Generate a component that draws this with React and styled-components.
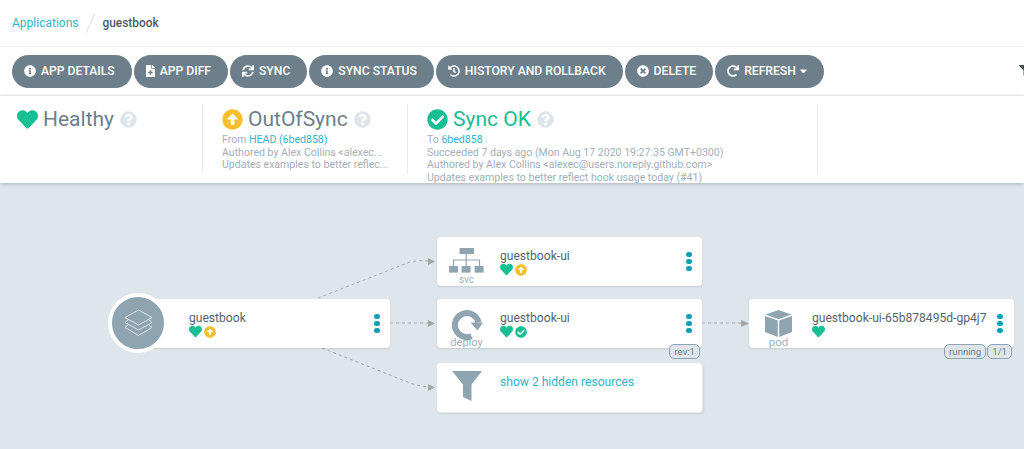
import React from 'react';
import styled, { createGlobalStyle } from 'styled-components';
import {
  FaInfoCircle, FaFileMedical, FaSync, FaHistory, FaTimesCircle, FaRedo, FaCaretDown,
  FaHeart, FaArrowAltCircleUp, FaCheckCircle, FaQuestionCircle, FaFilter,
} from 'react-icons/fa';

const Global = createGlobalStyle`
  html, body { margin: 0; padding: 0; background: #fff; }
  body { font-family: Roboto, "Liberation Sans", sans-serif; }
  * { box-sizing: border-box; }
`;

const Page = styled.div`
  width: 1024px; height: 449px; overflow: hidden;
  display: flex; flex-direction: column;
`;
const TopBar = styled.div`
  height: 46px; flex: none; display: flex; align-items: center;
  padding: 0 12px 0; background: #fff;
`;
const Crumb = styled.a`
  color: #2fb5c9; font-size: 12px;
`;
const Slash = styled.span`
  width: 1px; height: 22px; background: #dbe2e7; transform: rotate(24deg);
  margin: 0 11px 0 12px;
`;
const Current = styled.span`
  color: #4d5a66; font-weight: 500; font-size: 11.9px;
`;
const Toolbar = styled.div`
  height: 50px; flex: none; display: flex; align-items: center; gap: 2px;
  padding: 1px 0 0 12px; background: #fff; position: relative;
  border-top: 1px solid #f4f4f4; border-bottom: 2px solid #f6f6f6;
`;
const Button = styled.button`
  height: 33px; border: 0; border-radius: 17px; background: #6d7f8b; color: #fff;
  display: flex; align-items: center; gap: 5px; padding: 0 17px 0 12px;
  font: 500 12.15px Roboto, sans-serif; white-space: nowrap;
  svg { flex: none; height: 12px; width: 12px; }
`;
const FileIcon = styled(FaFileMedical)`
  && { width: 9px; }
`;
const Caret = styled(FaCaretDown)`
  && { width: 7px; margin-left: -1px; }
`;
const ToolbarFilter = styled.span`
  margin-left: auto; margin-right: -7px; display: flex; color: #44505b; font-size: 12px;
`;
const Summary = styled.div`
  height: 87px; flex: none; display: flex; background: #fff; padding-top: 8px;
  box-shadow: 0 1px 4px rgba(0,0,0,.22); position: relative; z-index: 2;
`;
const Item = styled.div`
  width: ${p => p.$w}px; height: 70px; padding: 2px 10px 0 ${p => p.$pl}px; flex: none;
  border-right: 1px solid #e8ecef;
`;
const Head = styled.div`
  display: flex; align-items: center; gap: 5px; height: 26px;
  font-size: 21px; color: ${p => p.$c || '#6d7f8b'};
`;
const Title = styled.span`line-height: 26px;`;
const HeadIcon = styled.span`
  display: flex; color: ${p => p.$c}; font-size: 21px;
`;
const Help = styled.span`
  display: flex; color: #dee6eb; font-size: 17px; margin-left: 1px;
`;
const Sub = styled.div`
  font-size: 10.55px; line-height: 12.6px; color: #a3b0ba;
  white-space: nowrap; position: relative; top: 2px;
`;
const Link = styled.span`color: #2fb5c9;`;

const Canvas = styled.div`
  flex: 1; position: relative; background: #dfe6eb; overflow: hidden;
`;
const Edges = styled.svg`
  position: absolute; left: 0; top: 0; width: 1024px; height: 266px;
`;
const Node = styled.div`
  position: absolute; left: ${p => p.$x}px; top: ${p => p.$y}px;
  width: ${p => p.$w || 265}px; height: 49px; background: #fff; border-radius: 4px;
  box-shadow: ${p => p.$stack ? '1px 1px 0 #e9eef1, 2px 2px 2px rgba(0,0,0,.1)' : '0 1px 2px rgba(0,0,0,.12)'};
  display: flex;
`;
const IconCol = styled.div`
  width: ${p => p.$w || 63}px; flex: none; display: flex; flex-direction: column; align-items: center;
  padding-top: ${p => p.$pt || 0}px; padding-right: 4px; height: 49px;
  svg { flex: none; display: block; }
`;
const Kind = styled.span`
  font-size: ${p => p.$s || 11}px; line-height: 11px; color: #a3b0ba; margin-top: ${p => p.$mt || 0}px;
`;
const Info = styled.div`
  flex: 1; min-width: 0; padding-top: 12px;
`;
const Name = styled.div`
  font-size: 12.1px; line-height: 15px; color: ${p => p.$link ? '#2fb5c9' : '#56646f'}; white-space: nowrap;
`;
const Status = styled.div`
  display: flex; align-items: center; gap: 2px; height: 14px; margin-top: -1.5px;
`;
const Mini = styled.span`
  display: flex; color: ${p => p.$c}; font-size: ${p => p.$s || 12}px;
`;
const Dots = styled.div`
  width: ${p => p.$w || 26}px; flex: none; display: flex; flex-direction: column; align-items: center;
  gap: 1.4px; padding-top: 15px;
`;
const Dot = styled.i`
  width: 5.4px; height: 5.4px; border-radius: 50%; background: #00a2b3; display: block;
`;
const Tags = styled.div`
  position: absolute; right: 2px; top: 45px; display: flex; gap: 1px;
`;
const Tag = styled.span`
  height: 15px; line-height: 13px; padding: 0 4px; border: 1px solid #8fa4b1; border-radius: 5px;
  background: #dee6eb; color: #6d7f8b; font-size: 9.6px; white-space: nowrap;
`;
const AppBadge = styled.div`
  position: absolute; left: 108px; top: 110px; width: 60px; height: 60px; border-radius: 50%;
  background: #8fa4b1; border: 4px solid #fff;
  display: flex; align-items: center; justify-content: center;
`;

const SvcIcon = () => (
  <svg width="35" height="25" viewBox="0 0 35 25" fill="#8fa4b1">
    <rect x="10.5" y="0" width="14.5" height="6" />
    <rect x="0" y="18" width="9" height="6.6" />
    <rect x="12.6" y="18" width="9" height="6.6" />
    <rect x="25.6" y="18" width="9" height="6.6" />
    <path d="M17.2 6v12M4.5 18v-6h26v6" fill="none" stroke="#8fa4b1" strokeWidth="1.2" />
  </svg>
);
const DeployIcon = () => (
  <svg width="32" height="32" viewBox="0 0 32 32">
    <path d="M20.5 27.2A12 12 0 1 1 27.6 13.5" fill="none" stroke="#8fa4b1" strokeWidth="6" />
    <path d="M19.5 13.5H32L26.5 21.5Z" fill="#8fa4b1" />
  </svg>
);
const PodIcon = () => (
  <svg width="27" height="27" viewBox="0 0 27 27" fill="#8fa4b1">
    <path d="M13.5 0L26.5 4.6L13.5 9.2L.5 4.6Z" />
    <path d="M0 6L12.8 10.6V27L0 22Z" />
    <path d="M27 6L14.2 10.6V27L27 22Z" />
  </svg>
);
const FunnelIcon = () => (
  <svg width="30" height="30" viewBox="0 0 30 30" fill="#8fa4b1">
    <path d="M0 0H30L19.5 13.5V30L11 26V13.5Z" />
  </svg>
);
const LayersIcon = () => (
  <svg width="29" height="28" viewBox="0 0 29 28" fill="none" stroke="#eef2f4" strokeWidth=".8" strokeLinejoin="round">
    <path d="M14.5 1L28 8.5L14.5 16L1 8.5Z" />
    <path d="M4.5 10.5L1 13.5L14.5 21L28 13.5L24.5 10.5" />
    <path d="M4.5 15.5L1 18.5L14.5 26.5L28 18.5L24.5 15.5" />
  </svg>
);

const buttons = [
  [FaInfoCircle, 'APP DETAILS'], [FileIcon, 'APP DIFF'], [FaSync, 'SYNC'],
  [FaInfoCircle, 'SYNC STATUS'], [FaHistory, 'HISTORY AND ROLLBACK'],
  [FaTimesCircle, 'DELETE'], [FaRedo, 'REFRESH'],
];

const Heart = () => <Mini $c="#18be94" $s={13}><FaHeart /></Mini>;
const Up = () => <Mini $c="#f4c030"><FaArrowAltCircleUp /></Mini>;
const Ok = () => <Mini $c="#18be94"><FaCheckCircle /></Mini>;
const Menu = ({ w }) => <Dots $w={w}><Dot /><Dot /><Dot /></Dots>;

export default function App() {
  return (
    <Page>
      <Global />
      <TopBar>
        <Crumb>Applications</Crumb>
        <Slash />
        <Current>guestbook</Current>
      </TopBar>
      <Toolbar>
        {buttons.map(([I, t]) => (
          <Button key={t}>
            <I />{t}{t === 'REFRESH' && <Caret />}
          </Button>
        ))}
        <ToolbarFilter><FaFilter /></ToolbarFilter>
      </Toolbar>
      <Summary>
        <Item $w={203} $pl={17}>
          <Head>
            <HeadIcon $c="#18be94"><FaHeart /></HeadIcon>
            <Title>Healthy</Title>
            <Help><FaQuestionCircle /></Help>
          </Head>
        </Item>
        <Item $w={205} $pl={19}>
          <Head>
            <HeadIcon $c="#f4c030"><FaArrowAltCircleUp /></HeadIcon>
            <Title>OutOfSync</Title>
            <Help><FaQuestionCircle /></Help>
          </Head>
          <Sub>From <Link>HEAD (6bed858)</Link></Sub>
          <Sub>Authored by Alex Collins &lt;alexec...</Sub>
          <Sub>Updates examples to better reflec...</Sub>
        </Item>
        <Item $w={410} $pl={19}>
          <Head $c="#18be94">
            <HeadIcon $c="#18be94"><FaCheckCircle /></HeadIcon>
            <Title>Sync OK</Title>
            <Help><FaQuestionCircle /></Help>
          </Head>
          <Sub>To <Link>6bed858</Link></Sub>
          <Sub>Succeeded 7 days ago (Mon Aug 17 2020 19:27:35 GMT+0300)</Sub>
          <Sub>Authored by Alex Collins &lt;alexec@users.noreply.github.com&gt;</Sub>
          <Sub>Updates examples to better reflect hook usage today (#41)</Sub>
        </Item>
      </Summary>
      <Canvas>
        <Edges viewBox="0 0 1024 266" fill="none">
          <g stroke="#a5a9ac" strokeWidth="1" strokeDasharray="3 3">
            <path d="M318 115L410 79C418 77 424 78 430 78" />
            <path d="M390 140H430" />
            <path d="M322 165L410 200C418 203 424 203 430 204" />
            <path d="M702 140H743" />
          </g>
          <g fill="#a5a5a5">
            <path d="M428 75L435 78.5L428 82Z" />
            <path d="M428 137L435 140.5L428 144Z" />
            <path d="M428 201L435 204.5L428 208Z" />
            <path d="M741 137L749 140.5L741 144Z" />
          </g>
        </Edges>
        <Node $x={137} $y={116} $w={253}>
          <IconCol $w={52} />
          <Info>
            <Name>guestbook</Name>
            <Status><Heart /><Up /></Status>
          </Info>
          <Menu />
        </Node>
        <AppBadge><LayersIcon /></AppBadge>
        <Node $x={437} $y={54}>
          <IconCol $pt={11}><SvcIcon /><Kind $mt={1} $s={10}>svc</Kind></IconCol>
          <Info>
            <Name>guestbook-ui</Name>
            <Status><Heart /><Up /></Status>
          </Info>
          <Menu />
        </Node>
        <Node $x={437} $y={116}>
          <IconCol $pt={10}><DeployIcon /><Kind $s={11} $mt={-4}>deploy</Kind></IconCol>
          <Info>
            <Name>guestbook-ui</Name>
            <Status><Heart /><Ok /></Status>
          </Info>
          <Menu />
          <Tags><Tag>rev:1</Tag></Tags>
        </Node>
        <Node $x={437} $y={180} $stack>
          <IconCol $pt={8}><FunnelIcon /></IconCol>
          <Info>
            <Name $link>show 2 hidden resources</Name>
          </Info>
        </Node>
        <Node $x={749} $y={116}>
          <IconCol $pt={11}><PodIcon /><Kind $s={11.5}>pod</Kind></IconCol>
          <Info>
            <Name>guestbook-ui-65b878495d-gp4j7</Name>
            <Status><Heart /></Status>
          </Info>
          <Menu w={28} />
          <Tags><Tag>running</Tag><Tag>1/1</Tag></Tags>
        </Node>
      </Canvas>
    </Page>
  );
}
